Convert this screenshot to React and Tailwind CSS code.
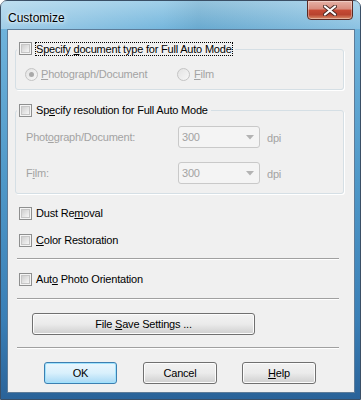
import React from 'react'

const FONT = { fontFamily: '"Liberation Sans", Arial, sans-serif' }

function Check() {
  return (
    <span className="block w-[13px] h-[13px] shrink-0 border border-[#8e8f8f] bg-[#f4f4f4] p-[1px]">
      <span className="block w-full h-full border border-[#c6c6c6] bg-linear-to-br from-[#cfcfcf] to-[#f6f6f6]" />
    </span>
  )
}

function Radio({ on }) {
  return (
    <span className="flex items-center justify-center w-[13px] h-[13px] shrink-0 rounded-full border border-[#c4c4c4] bg-linear-to-br from-[#e3e3e3] to-[#f7f7f7]">
      {on && <span className="block w-[5px] h-[5px] rounded-full bg-[#a9a9a9]" />}
    </span>
  )
}

function Select() {
  return (
    <div className="flex items-center justify-between w-[82px] h-[22px] rounded-[3px] border border-[#c9c9c9] bg-[#f4f4f4] pl-[3px] pr-[5px] text-[#a3a3a3]">
      <span>300</span>
      <svg width="8" height="5" viewBox="0 0 8 5">
        <path d="M0 0h8L4 4.5z" fill="#b3b3b3" />
      </svg>
    </div>
  )
}

function Button({ children, focused, className = '' }) {
  return (
    <div
      className={`flex items-center justify-center h-[22px] rounded-[3px] border ${
        focused
          ? 'border-[#3c7fb1] bg-linear-to-b from-[#eaf6fd] via-[#d9f0fc] to-[#a7d9f5] shadow-[inset_0_0_0_1px_#9fe2fd]'
          : 'border-[#707070] bg-linear-to-b from-[#f2f2f2] via-[#ebebeb] to-[#cfcfcf] shadow-[inset_0_0_0_1px_#fcfcfc]'
      } ${className}`}
    >
      {children}
    </div>
  )
}

function CheckRow({ children, className = '' }) {
  return (
    <div className={`flex items-center h-[13px] pl-[11px] ${className}`}>
      <Check />
      <span className="ml-[4px]">{children}</span>
    </div>
  )
}

function Sep({ className = '' }) {
  return <div className={`ml-[9px] w-[322px] h-[2px] border-t border-[#a0a0a0] border-b border-b-white ${className}`} />
}

export default function App() {
  return (
    <div className="w-[361px] h-[400px] overflow-hidden bg-white text-[11px] tracking-[-0.2px] text-black" style={FONT}>
      <div className="w-[361px] h-[400px] rounded-t-[7px] border border-[#3a4f66] bg-[linear-gradient(180deg,#9ccde8_0%,#6fb3db_7%,#4f98c8_45%,#3a7fb6_80%,#2a6399_100%)] px-[6px]">
        {/* title bar */}
        <div className="flex h-[28px] bg-[linear-gradient(90deg,rgba(255,255,255,0.35)_0%,rgba(255,255,255,0.05)_45%,rgba(0,0,0,0.05)_55%,rgba(255,255,255,0.2)_100%)] -mx-[6px] px-[7px]">
          <div className="pt-[8px] text-[12px] tracking-normal text-black [text-shadow:0_0_6px_#fff,0_0_3px_#fff]">Customize</div>
          <div className="ml-auto -mt-[1px] flex items-center justify-center w-[46px] h-[20px] rounded-b-[4px] border border-[#5a2a24] bg-[linear-gradient(180deg,#e6b1a6_0%,#d88c7d_45%,#c74b35_50%,#b8432f_75%,#d98d6a_100%)] shadow-[inset_0_0_0_1px_rgba(255,255,255,0.35)]">
            <svg width="14" height="11" viewBox="0 0 14 11">
              <path d="M2 1.5l10 8M12 1.5l-10 8" stroke="#4a2a25" strokeWidth="4" strokeLinecap="round" />
              <path d="M2 1.5l10 8M12 1.5l-10 8" stroke="#fff" strokeWidth="2.2" strokeLinecap="round" />
            </svg>
          </div>
        </div>

        {/* client area */}
        <div className="w-[348px] h-[364px] border border-[#5d7c99] bg-[#f0f0f0]">
          <div className="pl-[7px]">
            {/* group 1 */}
            <div className="mt-[19px] w-[329px] h-[41px] rounded-[3px] border border-[#d5dfe5] shadow-[1px_1px_0_#fff]">
              <div className="-mt-[8px] ml-[1px] w-fit flex items-center h-[13px] px-[2px] bg-[#f0f0f0]">
                <Check />
                <span className="ml-[3px] border border-dotted border-black px-[0px] leading-[12px] h-[14px]">
                  Specify <u className="underline-offset-1">d</u>ocument type for Full Auto Mode
                </span>
              </div>
              <div className="mt-[13px] pl-[9px] flex items-center h-[13px] text-[#a3a3a3]">
                <div className="flex items-center w-[152px]">
                  <Radio on />
                  <span className="ml-[3px]"><u className="underline-offset-1">P</u>hotograph/Document</span>
                </div>
                <div className="flex items-center">
                  <Radio />
                  <span className="ml-[4px]"><u className="underline-offset-1">F</u>ilm</span>
                </div>
              </div>
            </div>

            {/* group 2 */}
            <div className="mt-[20px] w-[329px] h-[84px] rounded-[3px] border border-[#d5dfe5] shadow-[1px_1px_0_#fff]">
              <div className="-mt-[7px] ml-[1px] w-fit flex items-center h-[13px] px-[2px] bg-[#f0f0f0]">
                <Check />
                <span className="ml-[4px] pr-[1px]">
                  Sp<u className="underline-offset-1">e</u>cify resolution for Full Auto Mode
                </span>
              </div>
              <div className="mt-[9px] pl-[10px] flex items-center text-[#a3a3a3]">
                <span className="w-[152px]">Phot<u className="underline-offset-1">o</u>graph/Document:</span>
                <Select />
                <span className="ml-[7px] mt-[2px]">dpi</span>
              </div>
              <div className="mt-[14px] pl-[10px] flex items-center text-[#a3a3a3]">
                <span className="w-[152px]">F<u className="underline-offset-1">i</u>lm:</span>
                <Select />
                <span className="ml-[7px] mt-[2px]">dpi</span>
              </div>
            </div>
          </div>

          <CheckRow className="mt-[13px]">
            Dust Re<u className="underline-offset-1">m</u>oval
          </CheckRow>
          <CheckRow className="mt-[14px]">
            <u className="underline-offset-1">C</u>olor Restoration
          </CheckRow>
          <Sep className="mt-[11px]" />
          <CheckRow className="mt-[13px]">
            Aut<u className="underline-offset-1">o</u> Photo Orientation
          </CheckRow>
          <Sep className="mt-[12px]" />

          <Button className="mt-[13px] ml-[24px] w-[223px]">
            <span>File <u className="underline-offset-1">S</u>ave Settings ...</span>
          </Button>
          <Sep className="mt-[12px]" />

          <div className="mt-[13px] flex pl-[36px]">
            <Button focused className="w-[73px]">OK</Button>
            <Button className="ml-[26px] w-[74px]">Cancel</Button>
            <Button className="ml-[25px] w-[74px]">
              <span><u className="underline-offset-1">H</u>elp</span>
            </Button>
          </div>
        </div>
      </div>
    </div>
  )
}
